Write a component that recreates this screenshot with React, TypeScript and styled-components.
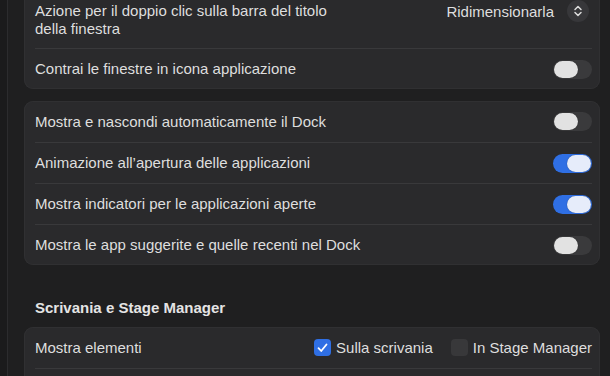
import { createGlobalStyle, styled } from "styled-components";

const GlobalStyle = createGlobalStyle`
  html, body {
    margin: 0;
    padding: 0;
    background: #1f1f20;
    overflow: hidden;
  }
  body {
    font-family: "Liberation Sans", Arial, sans-serif;
    -webkit-font-smoothing: antialiased;
  }
`;

const Window = styled.div`
  display: flex;
  width: 610px;
  height: 376px;
  overflow: hidden;
  background: #1f1f20;
`;

const SideEdge = styled.div`
  width: 7px;
  flex-shrink: 0;
  background: #1b1b1c;
  border-right: 1px solid #2c2c2e;
`;

const Content = styled.div`
  flex: 1;
  display: flex;
  flex-direction: column;
  padding: 0 10px 0 16px;
`;

const Card = styled.div<{ $cut?: boolean; $flush?: boolean }>`
  background: #2a2a2c;
  border-radius: 9px;
  box-shadow: inset 0 0 0 1px #303032;
  margin-top: ${(p) => (p.$cut ? "-8px" : p.$flush ? "0" : "12px")};
  flex-shrink: 0;
`;

const Row = styled.div<{ $tall?: boolean }>`
  display: flex;
  align-items: center;
  justify-content: space-between;
  margin: 0 8px 0 11px;
  min-height: 41px;
  padding: ${(p) => (p.$tall ? "10px 0" : "0")};
  box-sizing: border-box;
  & + & {
    border-top: 1px solid #39393b;
  }
`;

const Label = styled.span<{ $narrow?: boolean }>`
  color: #dedede;
  font-size: 15px;
  line-height: 18px;
  max-width: ${(p) => (p.$narrow ? "320px" : "none")};
`;

const SectionTitle = styled.div`
  color: #e4e4e4;
  font-size: 15px;
  font-weight: 700;
  line-height: 18px;
  padding: 34px 0 10px 11px;
`;

const Toggle = styled.div<{ $on?: boolean }>`
  width: 39px;
  height: 19px;
  border-radius: 10px;
  background: ${(p) => (p.$on ? "#2f6fe4" : "#3a3a3c")};
  display: flex;
  align-items: center;
  justify-content: ${(p) => (p.$on ? "flex-end" : "flex-start")};
  padding: 0 1px;
  box-sizing: border-box;
  flex-shrink: 0;
  &::after {
    content: "";
    width: 24px;
    height: 17px;
    border-radius: 9px;
    background: ${(p) => (p.$on ? "#e6ecfa" : "#e2e2e2")};
    box-shadow: 0 0 1px rgba(0, 0, 0, 0.5);
  }
`;

const Popup = styled.div`
  display: flex;
  align-items: center;
  gap: 13px;
  align-self: flex-start;
  margin-top: -2px;
  color: #dedede;
  font-size: 15px;
`;

const Stepper = styled.div`
  width: 22px;
  height: 22px;
  border-radius: 50%;
  background: #37373a;
  display: flex;
  align-items: center;
  justify-content: center;
  margin-right: 3px;
`;

const Choices = styled.div`
  display: flex;
  align-items: center;
  gap: 18px;
`;

const Choice = styled.label`
  display: flex;
  align-items: center;
  gap: 5px;
  color: #dedede;
  font-size: 15px;
`;

const Box = styled.span<{ $checked?: boolean }>`
  width: 17px;
  height: 17px;
  border-radius: 4px;
  background: ${(p) => (p.$checked ? "#2f6fe4" : "#38383a")};
  display: flex;
  align-items: center;
  justify-content: center;
`;

export default function App() {
  return (
    <>
      <GlobalStyle />
      <Window>
        <SideEdge />
        <Content>
          <Card $cut>
            <Row $tall>
              <Label $narrow>
                Azione per il doppio clic sulla barra del titolo della finestra
              </Label>
              <Popup>
                Ridimensionarla
                <Stepper>
                  <svg width="10" height="12" viewBox="0 0 10 12" fill="none">
                    <path
                      d="M2 4.5 5 1.5 8 4.5M2 7.5 5 10.5 8 7.5"
                      stroke="#dcdcdc"
                      strokeWidth="1.5"
                      strokeLinecap="round"
                      strokeLinejoin="round"
                    />
                  </svg>
                </Stepper>
              </Popup>
            </Row>
            <Row>
              <Label>Contrai le finestre in icona applicazione</Label>
              <Toggle />
            </Row>
          </Card>
          <Card>
            <Row>
              <Label>Mostra e nascondi automaticamente il Dock</Label>
              <Toggle />
            </Row>
            <Row>
              <Label>Animazione all’apertura delle applicazioni</Label>
              <Toggle $on />
            </Row>
            <Row>
              <Label>Mostra indicatori per le applicazioni aperte</Label>
              <Toggle $on />
            </Row>
            <Row>
              <Label>Mostra le app suggerite e quelle recenti nel Dock</Label>
              <Toggle />
            </Row>
          </Card>
          <SectionTitle>Scrivania e Stage Manager</SectionTitle>
          <Card $flush>
            <Row>
              <Label>Mostra elementi</Label>
              <Choices>
                <Choice>
                  <Box $checked>
                    <svg width="11" height="10" viewBox="0 0 11 10" fill="none">
                      <path
                        d="M1.5 5.2 4.2 8 9.5 1.5"
                        stroke="#fff"
                        strokeWidth="1.8"
                        strokeLinecap="round"
                        strokeLinejoin="round"
                      />
                    </svg>
                  </Box>
                  Sulla scrivania
                </Choice>
                <Choice>
                  <Box />
                  In Stage Manager
                </Choice>
              </Choices>
            </Row>
            <Row>
              <Label>&nbsp;</Label>
            </Row>
          </Card>
        </Content>
      </Window>
    </>
  );
}
